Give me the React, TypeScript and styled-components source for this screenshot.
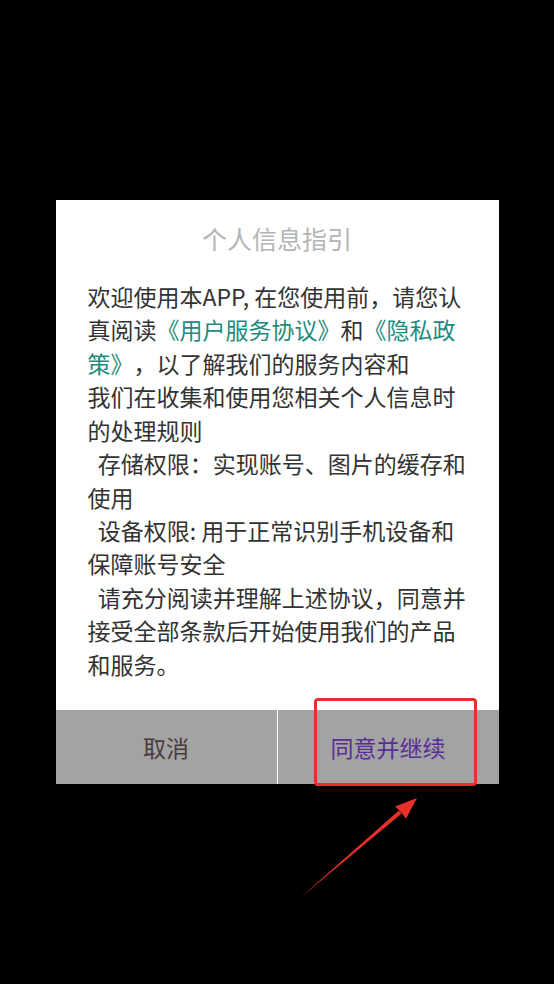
import React from 'react';
import styled, { createGlobalStyle } from 'styled-components';

const GlobalStyle = createGlobalStyle`
  html, body {
    margin: 0;
    padding: 0;
    background: #000;
  }
  body {
    font-family: "Noto Sans CJK SC", "Noto Sans", sans-serif;
    text-spacing-trim: space-all;
  }
`;

const Page = styled.div`
  position: relative;
  width: 554px;
  height: 984px;
  background: #000;
  display: flex;
  align-items: center;
  justify-content: center;
  overflow: hidden;
`;

const Dialog = styled.div`
  width: 443px;
  background: #fff;
  display: flex;
  flex-direction: column;
`;

const Title = styled.div`
  padding-top: 20px;
  font-size: 25px;
  line-height: 36px;
  text-align: center;
  color: #b4b4b4;
`;

const Body = styled.div`
  padding: 24px 16px 29px 32px;
  font-size: 23px;
  line-height: 33.4px;
  color: #333;
  white-space: pre;
  text-spacing-trim: space-all;
`;

const Link = styled.span`
  color: #1e8c7c;
`;

const Actions = styled.div`
  display: flex;
  height: 74px;
  background: #a3a3a3;
`;

const ActionButton = styled.div<{ $primary?: boolean }>`
  position: relative;
  flex: 1;
  display: flex;
  align-items: center;
  justify-content: center;
  font-size: 23px;
  color: ${(p) => (p.$primary ? '#5a2e98' : '#4a3b3b')};
  border-left: ${(p) => (p.$primary ? '1px solid #fff' : 'none')};
`;

const Highlight = styled.div`
  position: absolute;
  left: 36px;
  right: 22px;
  top: -12px;
  bottom: -2px;
  border: 3px solid #e8302a;
  border-radius: 4px;
  pointer-events: none;
`;

const ArrowLayer = styled.svg`
  position: absolute;
  left: 0;
  top: 0;
  pointer-events: none;
`;

const App: React.FC = () => {
  return (
    <>
      <GlobalStyle />
      <Page>
        <Dialog>
          <Title>个人信息指引</Title>
          <Body>
            {'欢迎使用本APP, 在您使用前，请您认\n真阅读'}
            <Link>《用户服务协议》</Link>
            {'和'}
            <Link>{'《隐私政\n策》'}</Link>
            {'，以了解我们的服务内容和\n我们在收集和使用您相关个人信息时\n的处理规则\n  存储权限：实现账号、图片的缓存和\n使用\n  设备权限: 用于正常识别手机设备和\n保障账号安全\n  请充分阅读并理解上述协议，同意并\n接受全部条款后开始使用我们的产品\n和服务。'}
          </Body>
          <Actions>
            <ActionButton>取消</ActionButton>
            <ActionButton $primary>
              同意并继续
              <Highlight />
            </ActionButton>
          </Actions>
        </Dialog>
        <ArrowLayer width="554" height="984" viewBox="0 0 554 984">
          <polygon points="300,898 401.8,813.6 398.8,810.6" fill="#e8302a" />
          <polygon points="417,798 406,818.8 401,812 395,806.5" fill="#e8302a" />
        </ArrowLayer>
      </Page>
    </>
  );
};

export default App;
